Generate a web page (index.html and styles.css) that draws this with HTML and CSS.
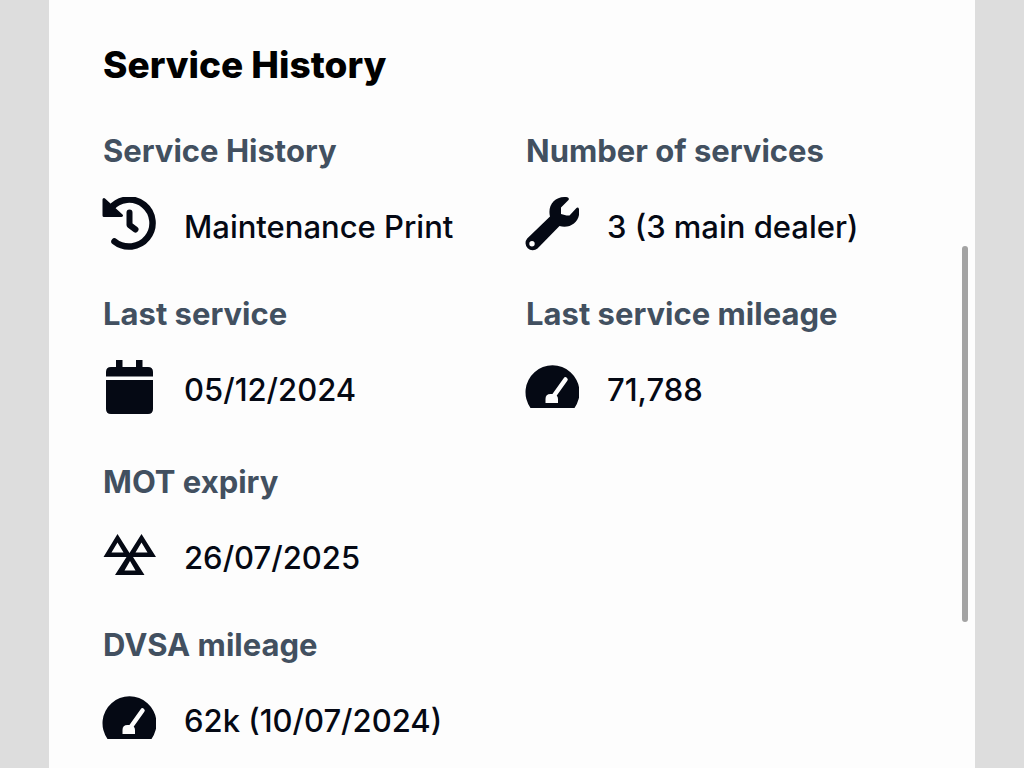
FILE: index.html
```html
<!DOCTYPE html>
<html lang="en">
<head>
<meta charset="utf-8">
<meta name="viewport" content="width=device-width, initial-scale=1">
<title>Service History</title>
<link rel="stylesheet" href="styles.css">
</head>
<body>
<svg class="sprite" aria-hidden="true">
  <symbol id="gauge" viewBox="0 0 54 54">
    <path d="M5.500 48A27 27 0 1 1 49.500 48Z" fill="currentColor"/>
    <path d="M40.500 19.500 28 37" stroke="#fdfdfd" stroke-width="4.500" stroke-linecap="round"/>
    <path d="M20.500 43v-4q0-5 5-5h3q4.500 1 4.500 5v4Z" fill="#fdfdfd"/>
  </symbol>
</svg>
<main class="card">
  <h1 class="title">Service History</h1>
  <dl class="details">
    <div class="item">
      <dt class="label">Service History</dt>
      <dd class="value">
        <svg class="icon" viewBox="0 0 54 54" aria-hidden="true">
          <path d="M12.500 44.500A23.500 23.500 0 1 0 9 11" fill="none" stroke="currentColor" stroke-width="6.500" stroke-linecap="round"/>
          <path d="M2 2.500 19.500 18.500H2Z" fill="currentColor" stroke="currentColor" stroke-width="3" stroke-linejoin="round"/>
          <path d="M27.500 15.500V28l6 4.500" fill="none" stroke="currentColor" stroke-width="6" stroke-linecap="round" stroke-linejoin="round"/>
        </svg>
        <span>Maintenance Print</span>
      </dd>
    </div>
    <div class="item">
      <dt class="label">Number of services</dt>
      <dd class="value">
        <svg class="icon" viewBox="0 0 54 54" aria-hidden="true">
          <path fill="currentColor" fill-rule="evenodd" d="M43 .5Q45 2 42.500 4L36 10.500V17L41.500 18.500H44.500L51 11.500Q53 9.500 54 12C56 24 46 32 34.500 29L12.500 51.500A7.200 7.200 0 0 1 2.200 41.500L25 19.500C22 8 31-2 43 .5ZM7 44A2.700 2.700 0 1 0 7 49.400 2.700 2.700 0 1 0 7 44Z"/>
        </svg>
        <span>3 (3 main dealer)</span>
      </dd>
    </div>
    <div class="item">
      <dt class="label">Last service</dt>
      <dd class="value">
        <svg class="icon" viewBox="0 0 54 54" aria-hidden="true">
          <path fill="currentColor" d="M14 0h6.500v7H34V0h6.500v7H46q5 0 5 5v4.500H4V12q0-5 5-5h5ZM4 20h47v29q0 5-5 5H9q-5 0-5-5Z"/>
        </svg>
        <span>05/12/2024</span>
      </dd>
    </div>
    <div class="item">
      <dt class="label">Last service mileage</dt>
      <dd class="value">
        <svg class="icon" aria-hidden="true"><use href="#gauge"/></svg>
        <span>71,788</span>
      </dd>
    </div>
  </dl>
  <dl class="details">
    <div class="item item-wide">
      <dt class="label">MOT expiry</dt>
      <dd class="value">
        <svg class="icon" viewBox="0 0 54 54" aria-hidden="true">
          <path fill="currentColor" fill-rule="evenodd" d="M15.500 6 27.500 25 39.500 6 54 29H31L42.500 47H13L24.500 29H1.500ZM15.500 14.500 9.500 24.500h12ZM39.500 14.500 33.500 24.500h12ZM28 33 22.500 42.500h11Z"/>
        </svg>
        <span>26/07/2025</span>
      </dd>
    </div>
    <div class="item item-wide">
      <dt class="label">DVSA mileage</dt>
      <dd class="value">
        <svg class="icon" aria-hidden="true"><use href="#gauge"/></svg>
        <span>62k (10/07/2024)</span>
      </dd>
    </div>
  </dl>
  <div class="scrollbar"></div>
</main>
</body>
</html>
```
FILE: styles.css
```css
* {
  box-sizing: border-box;
}

body {
  margin: 0;
  padding: 0 49px;
  background: #ddd;
  color: #050914;
  font-family: Inter, "Liberation Sans", sans-serif;
}

.sprite {
  position: absolute;
  width: 0;
  height: 0;
}

.card {
  position: relative;
  min-height: 100vh;
  padding: 40px 27px 20px 53px;
  background: #fdfdfd;
}

.title,
.label {
  padding-left: 1px;
}

.title {
  margin: 0 0 41px;
  color: #000;
  font-size: 37px;
  font-weight: 800;
  line-height: 50px;
}

.details {
  display: grid;
  grid-template-columns: 1fr 1fr;
  row-gap: 43px;
  margin: 0 0 48px;
}

.details:last-of-type {
  margin-bottom: 0;
}

.item-wide {
  grid-column: 1 / -1;
}

.label {
  margin-bottom: 26px;
  color: #425060;
  font-size: 31px;
  font-weight: 700;
  line-height: 40px;
}

.value {
  display: flex;
  align-items: flex-end;
  gap: 28px;
  margin: 0;
  font-size: 31px;
  font-weight: 500;
  line-height: 48px;
}

.icon {
  flex: none;
  width: 54px;
  height: 54px;
}

.scrollbar {
  position: absolute;
  top: 246px;
  right: 7px;
  width: 6px;
  height: 376px;
  border-radius: 3px;
  background: #a3a3a3;
}
```
